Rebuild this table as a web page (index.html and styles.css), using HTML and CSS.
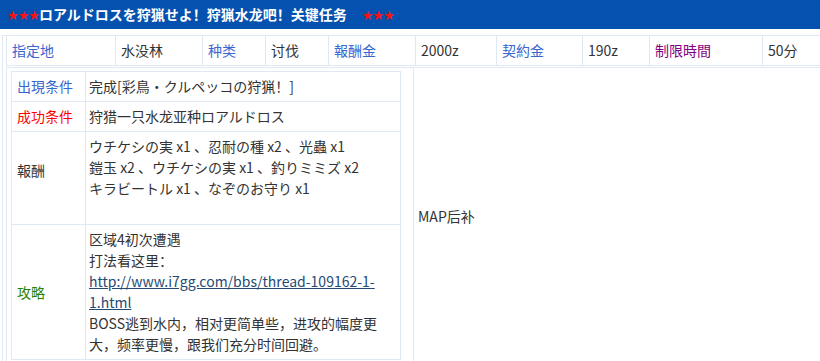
FILE: index.html
```html
<!DOCTYPE html>
<html lang="zh">
<head>
<meta charset="utf-8">
<link rel="stylesheet" href="styles.css">
</head>
<body>
<div class="title"><span class="stars">★★★</span>ロアルドロスを狩猟せよ！狩猟水龙吧！关键任务<span class="gap"></span><span class="stars">★★★</span></div>
<div class="wrap">
  <div class="info">
    <div class="cell blue">指定地</div>
    <div class="cell">水没林</div>
    <div class="cell blue">种类</div>
    <div class="cell">讨伐</div>
    <div class="cell blue">報酬金</div>
    <div class="cell">2000z</div>
    <div class="cell blue">契約金</div>
    <div class="cell">190z</div>
    <div class="cell purple">制限時間</div>
    <div class="cell">50分</div>
  </div>
  <div class="main">
    <div class="left">
      <div class="detail">
        <div class="lab blue">出現条件</div>
        <div class="val">完成[彩鳥・クルペッコの狩猟！]</div>
        <div class="lab red">成功条件</div>
        <div class="val">狩猎一只水龙亚种ロアルドロス</div>
        <div class="lab lab-up">報酬</div>
        <div class="val">ウチケシの実 x1 、忍耐の種 x2 、光蟲 x1<br>鎧玉 x2 、ウチケシの実 x1 、釣りミミズ x2<br>キラビートル x1 、なぞのお守り x1<br>&nbsp;</div>
        <div class="lab green last">攻略</div>
        <div class="val last">区域4初次遭遇<br>打法看这里：<br><a href="#">http://www.i7gg.com/bbs/thread-109162-1-1.html</a><br>BOSS逃到水内，相对更简单些，进攻的幅度更大，频率更慢，跟我们充分时间回避。</div>
      </div>
    </div>
    <div class="map">MAP后补</div>
  </div>
</div>
</body>
</html>
```
FILE: styles.css
```css
html, body {
  margin: 0;
  padding: 0;
  background: #fff;
  overflow: hidden;
}
body {
  font-family: "Noto Sans CJK SC", "Noto Sans CJK JP", sans-serif;
  font-size: 14px;
  color: #333;
  width: 820px;
  text-spacing-trim: space-all;
}
.title {
  background: #0551b0;
  height: 29px;
  line-height: 29px;
  padding-left: 7px;
  color: #fff;
  font-weight: bold;
  font-size: 14px;
  white-space: nowrap;
}
.stars {
  color: #ff1010;
  font-family: "DejaVu Sans", sans-serif;
  font-size: 13px;
  font-weight: normal;
  letter-spacing: -1px;
}
.gap {
  display: inline-block;
  width: 15px;
}
.wrap {
  margin-top: 6px;
  margin-left: 2px;
  border-left: 1px solid #dfe8f3;
  border-top: 1px solid #dfe8f3;
  padding-left: 3px;
}
.info {
  display: grid;
  grid-template-columns: 109px 87px 63px 63px 87px 81px 86px 67px 113px 1fr;
  border-bottom: 1px solid #dfe8f3;
}
.cell {
  border-left: 1px solid #dfe8f3;
  height: 29px;
  line-height: 29px;
  padding-left: 5px;
  white-space: nowrap;
}
.blue { color: #3a66d0; }
.purple { color: #800080; }
.red { color: #ff0000; }
.green { color: #2a8200; }
.main {
  margin-top: 1px;
  border-top: 1px solid #dfe8f3;
  display: grid;
  grid-template-columns: 407px 1fr;
}
.left {
  border-left: 1px solid #dfe8f3;
  padding: 3px 0 3px 4px;
}
.detail {
  width: 388px;
  border: 1px solid #dfe8f3;
  display: grid;
  grid-template-columns: 74px 1fr;
}
.lab {
  border-right: 1px solid #dfe8f3;
  border-bottom: 1px solid #dfe8f3;
  padding: 4px 0 4px 5px;
  line-height: 21px;
  display: flex;
  align-items: center;
}
.lab-up {
  padding-bottom: 20px;
}
.val {
  border-bottom: 1px solid #dfe8f3;
  padding: 4px 14px 4px 3px;
  line-height: 21px;
}
.last {
  border-bottom: none;
}
.val a {
  color: #254a73;
  text-decoration: underline;
}
.map {
  border-left: 1px solid #dfe8f3;
  padding-left: 4px;
  display: flex;
  align-items: center;
}
```
